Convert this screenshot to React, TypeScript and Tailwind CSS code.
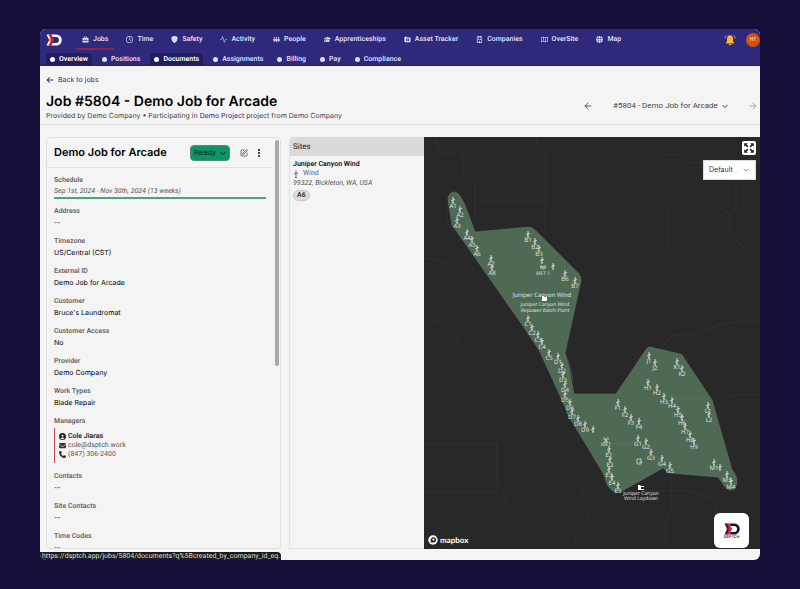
import type { ElementType, ReactNode } from "react";
import clsx from "clsx";
import {
  FaArrowLeft,
  FaChevronDown,
  FaCircle,
  FaCircleUser,
  FaEnvelope,
  FaGlobe,
  FaGraduationCap,
  FaPeopleGroup,
  FaPhone,
  FaRegBuilding,
  FaRegClock,
  FaRegMap,
} from "react-icons/fa6";
import { BsFillShieldFill } from "react-icons/bs";
import { Activity, ArrowLeft, ArrowRight, ChevronDown, EllipsisVertical, SquarePen } from "lucide-react";

interface IconProps {
  className?: string;
}

function ToolboxIcon({ className }: IconProps) {
  return (
    <svg viewBox="0 0 16 16" className={className} fill="currentColor" aria-hidden="true">
      <path d="M5 4V2.5A1.5 1.5 0 0 1 6.500 1h3A1.500 1.500 0 0 1 11 2.500V4h2.500A1.500 1.500 0 0 1 15 5.500V9h-4V8H9.500v1h-3V8H5v1H1V5.500A1.500 1.500 0 0 1 2.500 4zm1.500 0h3V2.500h-3zM1 10.300h4v1h1.500v-1h3v1H11v-1h4v3.200a1.500 1.500 0 0 1-1.500 1.500h-11A1.500 1.500 0 0 1 1 13.500z" />
    </svg>
  );
}

function AssetIcon({ className }: IconProps) {
  return (
    <svg viewBox="0 0 16 16" className={className} fill="currentColor" aria-hidden="true">
      <path
        fillRule="evenodd"
        d="M1 3a1.500 1.500 0 0 1 1.500-1.500H6L8 3.500h5.500A1.500 1.500 0 0 1 15 5v8a1.500 1.500 0 0 1-1.500 1.500h-11A1.500 1.500 0 0 1 1 13zm4 3.500v5h6.500v-5H9.700L9 5.500H7.500l-.7 1zM8.200 7.500a1.500 1.500 0 1 1 0 3 1.500 1.500 0 0 1 0-3z"
      />
    </svg>
  );
}

function BellIcon({ className }: IconProps) {
  return (
    <svg viewBox="0 0 24 24" className={className} aria-hidden="true">
      <g fill="#fdb33c">
        <path d="M12 2.500c-3.800 0-6 2.800-6 6.500v5.500L4 18v1h16v-1l-2-3.500V9c0-3.700-2.200-6.500-6-6.500z" />
        <path d="M9.500 20h5a2.500 2.500 0 0 1-5 0z" />
      </g>
      <path d="M5 2.500C3 4 2 6 1.800 9M19 2.500c2 1.500 3 3.500 3.200 6.500" fill="none" stroke="#f0a050" strokeWidth="1.800" />
    </svg>
  );
}

function Logo({ className, dark }: IconProps & { dark?: boolean }) {
  return (
    <svg viewBox="0 0 32 24" className={className} fill="none" aria-hidden="true">
      <path
        d="M10 1h11a10.500 11 0 0 1 0 22H10l3.500-5H20a6 6 0 0 0 0-12h-6.500z"
        fill={dark ? "#14173d" : "#fff"}
      />
      <path d="M1 1h6.500L12 12 7.500 23H1l5.500-11z" fill={dark ? "#14173d" : "#fff"} />
      <path d="M5 1h5l6 11-6 11H5l5-11z" fill="#d3202e" />
      <path d="M4 12h9" stroke="#d3202e" strokeWidth="2" />
    </svg>
  );
}

function TurbineIcon({ className }: IconProps) {
  return (
    <svg viewBox="0 0 12 16" className={className} stroke="currentColor" strokeWidth="1.600" fill="none" aria-hidden="true">
      <path d="M6 6V1M6 6l-4 2M6 6l4 1M6 7v8M4 15h4" />
    </svg>
  );
}

interface NavItem {
  label: string;
  icon: ElementType;
}

const NAV: NavItem[] = [
  { label: "Jobs", icon: ToolboxIcon },
  { label: "Time", icon: FaRegClock },
  { label: "Safety", icon: BsFillShieldFill },
  { label: "Activity", icon: Activity },
  { label: "People", icon: FaPeopleGroup },
  { label: "Apprenticeships", icon: FaGraduationCap },
  { label: "Asset Tracker", icon: AssetIcon },
  { label: "Companies", icon: FaRegBuilding },
  { label: "OverSite", icon: FaRegMap },
  { label: "Map", icon: FaGlobe },
];

const TABS = ["Overview", "Positions", "Documents", "Assignments", "Billing", "Pay", "Compliance"];
const HIGHLIGHTED = ["Overview", "Documents"];

function TopNav() {
  return (
    <header className="shrink-0 border-b border-[#211a80] bg-[#2e297b] text-[7px] font-semibold text-[#dedcf2]">
      <div className="flex h-[21px] items-center pl-1.5">
        <a href="#home" aria-label="Home" className="mr-3.5">
          <Logo className="h-3 w-4" />
        </a>
        <nav aria-label="Main" className="flex h-full items-center gap-1.5">
          {NAV.map(({ label, icon: Icon }, i) => (
            <a
              key={label}
              href={`#${label}`}
              className={clsx(
                "flex h-full items-center gap-1 border-y-2 border-transparent px-1.5 whitespace-nowrap",
                i === 0 && "border-b-[#8f2050]"
              )}
            >
              <Icon className="size-[7px] shrink-0" />
              {label}
            </a>
          ))}
        </nav>
        <button type="button" aria-label="Notifications" className="ml-auto">
          <BellIcon className="size-3" />
        </button>
        <button
          type="button"
          className="ml-2.5 size-3.5 shrink-0 rounded-full bg-[#d4500f] text-[5px] font-semibold text-[#ffd9a8]"
        >
          HT
        </button>
      </div>
      <nav aria-label="Job sections" className="flex h-[15px] items-end gap-1.5 px-1.5">
        {TABS.map((tab) => (
          <a
            key={tab}
            href={`#${tab}`}
            className={clsx(
              "flex h-3 items-center gap-1 rounded-t-sm px-1",
              HIGHLIGHTED.includes(tab) && "bg-[#211d5e] text-white"
            )}
          >
            <FaCircle className="size-[5px] shrink-0" />
            {tab}
          </a>
        ))}
      </nav>
    </header>
  );
}

function JobHeader() {
  return (
    <div className="flex shrink-0 items-end border-b border-[#dedede] px-1.5 pt-2">
      <div className="pb-0.5 font-[Inter,sans-serif]">
        <a href="#jobs" className="flex h-3 items-center gap-1 text-[7px] text-[#2f2b78]">
          <FaArrowLeft className="size-2" />
          Back to jobs
        </a>
        <h1 className="mt-2 text-[14px] leading-4 font-semibold text-black">Job #5804 - Demo Job for Arcade</h1>
        <p className="text-[7px] leading-3 text-[#444]">
          Provided by Demo Company • Participating in{" "}
          <a href="#project" className="text-[#2f2b78]">
            Demo Project
          </a>{" "}
          project from Demo Company
        </p>
      </div>
      <div className="-mr-1 ml-auto flex items-center pb-3 text-[8px] text-[#444]">
        <button type="button" aria-label="Previous job">
          <ArrowLeft className="size-2.5" />
        </button>
        <div className="mx-5 flex items-center gap-1">
          <select aria-label="Job" className="appearance-none bg-transparent">
            <option>#5804 - Demo Job for Arcade</option>
          </select>
          <FaChevronDown className="size-1.5" />
        </div>
        <button type="button" aria-label="Next job" className="text-[#999]">
          <ArrowRight className="size-2.5" />
        </button>
      </div>
    </div>
  );
}

function Field({ label, children }: { label: string; children: ReactNode }) {
  return (
    <div className="mb-2">
      <dt className="text-[7px] leading-2.5 font-semibold text-[#666]">{label}</dt>
      <dd className="mt-0.5 font-[Inter,sans-serif] text-[7px] leading-2.5 text-black">{children}</dd>
    </div>
  );
}

function JobCard() {
  return (
    <section className="relative flex w-[235px] shrink-0 flex-col overflow-hidden rounded-sm border border-[#e0e0e0]">
      <div className="mr-2 flex h-[30px] shrink-0 items-center border-b border-[#e2e2e2] pr-2 pl-[7px]">
        <h2 className="font-[Inter,sans-serif] text-[11px] font-semibold text-black">Demo Job for Arcade</h2>
        <button
          type="button"
          className="ml-auto flex h-4 w-10 items-center justify-center gap-1 rounded-sm border border-[#4c8f75] bg-[#0d9467] text-[8px] text-[#06291d]"
        >
          Ready
          <FaChevronDown className="size-1.5" />
        </button>
        <button type="button" aria-label="Edit" className="ml-2.5 text-[#333]">
          <SquarePen className="size-2" />
        </button>
        <button type="button" aria-label="More" className="ml-1.5 text-[#111]">
          <EllipsisVertical className="size-2.5" strokeWidth={3} />
        </button>
      </div>
      <dl className="pt-[7px] pr-3.5 pl-[7px]">
        <div className="mb-[7px] border-b-2 border-[#4aa37e]">
          <dt className="text-[7px] leading-2.5 font-semibold text-[#666]">Schedule</dt>
          <dd className="text-[7px] leading-3 text-[#555] italic">Sep 1st, 2024 - Nov 30th, 2024 (13 weeks)</dd>
        </div>
        <Field label="Address">--</Field>
        <Field label="Timezone">US/Central (CST)</Field>
        <Field label="External ID">Demo Job for Arcade</Field>
        <Field label="Customer">Bruce's Laundromat</Field>
        <Field label="Customer Access">No</Field>
        <Field label="Provider">Demo Company</Field>
        <Field label="Work Types">Blade Repair</Field>
        <Field label="Managers">
          <div className="border-l border-[#c8454f] py-1 pl-1 font-[Roboto,sans-serif] leading-[9px] text-[#555]">
            <div className="flex items-center gap-0.5 font-semibold text-[#222]">
              <FaCircleUser className="size-[7px]" />
              Cole Jiaras
            </div>
            <div className="flex items-center gap-0.5">
              <FaEnvelope className="size-[7px] text-[#333]" />
              cole@dsptch.work
            </div>
            <div className="flex items-center gap-0.5">
              <FaPhone className="size-[7px] text-[#333]" />
              (847) 306-2400
            </div>
          </div>
        </Field>
        <Field label="Contacts">--</Field>
        <Field label="Site Contacts">--</Field>
        <Field label="Time Codes">--</Field>
      </dl>
      <div className="absolute top-0.5 right-px h-[55%] w-1 rounded-full bg-[#a8a8a8]" />
    </section>
  );
}

function SitesPanel() {
  return (
    <section className="w-[135px] shrink-0 overflow-hidden rounded-tl-sm border-b border-l border-[#e2e2e2]">
      <h2 className="flex h-[19px] items-center bg-[#dadada] pl-[3px] text-[8px] text-[#222]">Sites</h2>
      <div className="px-[3px] pt-1 text-[7px] leading-[9px] text-[#555]">
        <h3 className="font-semibold text-[#111]">Juniper Canyon Wind</h3>
        <p className="flex items-center gap-1 text-[#666]">
          <TurbineIcon className="h-2 w-1.5 text-[#4a4a8a]" />
          Wind
        </p>
        <p className="mt-px italic">99322, Bickleton, WA, USA</p>
        <span className="mt-0.5 inline-block rounded-full border border-[#c8c8c8] bg-[#dcdcdc] px-[3px] font-medium text-[#222]">
          A6
        </span>
      </div>
    </section>
  );
}

// [label, x, y] of each turbine, in map units
const TURBINES: [string, number, number][] = [
  ["A1", 29, 64], ["A2", 36, 73], ["A3", 33, 84], ["A4", 43, 96], ["A5", 48, 103], ["A6", 53, 112],
  ["A7", 67, 122], ["A8", 68, 131],
  ["B1", 104, 98], ["B2", 111, 105], ["B3", 115, 112], ["", 118, 124], ["", 129, 130], ["B6", 141, 137],
  ["B7", 151, 144],
  ["C1", 104, 182], ["C2", 108, 191], ["C3", 114, 198], ["C4", 118, 205], ["C5", 125, 216],
  ["D1", 134, 220], ["D2", 138, 229], ["D3", 139, 238], ["D4", 141, 248], ["D5", 141, 258],
  ["D6", 146, 266], ["D7", 148, 275], ["D8", 154, 282], ["D9", 161, 288], ["", 169, 293],
  ["E1", 185, 313], ["E2", 186, 323], ["E3", 185, 333], ["E4", 188, 341], ["E5", 194, 349],
  ["F1", 194, 266], ["F2", 201, 273], ["F3", 207, 281], ["F4", 215, 285],
  ["G1", 214, 302], ["G2", 222, 305], ["G3", 227, 316], ["G4", 238, 322], ["G5", 246, 329],
  ["H1", 224, 246], ["H2", 233, 251], ["H3", 240, 260], ["H4", 248, 264], ["H5", 254, 273],
  ["H6", 258, 281], ["H7", 261, 290], ["H8", 266, 298], ["H9", 270, 305],
  ["J1", 225, 219], ["J2", 231, 226], ["K1", 253, 225], ["K2", 258, 232],
  ["L1", 284, 269], ["L2", 285, 278],
  ["M1", 290, 326], ["", 296, 331], ["M3", 303, 338], ["M4", 307, 345],
];

function SiteMap() {
  return (
    <div className="relative min-w-0 flex-1 overflow-hidden bg-[#282828]">
      <svg
        viewBox="0 0 336 412"
        preserveAspectRatio="xMinYMin slice"
        className="block size-full font-['Open_Sans','Noto_Sans',sans-serif]"
        role="img"
        aria-label="Site map"
      >
        <g fill="none" stroke="#343434" strokeWidth="0.7">
          <path d="M10 0l7 17h22v21l12 10v31l20 13M51 65h70v40M112 0l3 10 7 8v47" />
          <path d="M156 181l62 43M0 122h12l20 10 15 10M6 183l16 3 12 13v14M42 96l-18-8-2-35" />
          <path d="M294 262l17-4h25M0 307h73v33l10 26 14 22 10 14M0 355h73v-48M247 317v55l-5 9v31" />
          <path d="M240 18h18l4 8h50M236 75h8v38M312 45v26l-8 12 6 18 10 10M265 71h34l10 10-8 20-14 12" />
          <path d="M202 317h45M218 354h48l24 8 8 24M236 211l12-12 26-2 22-10 40-4M150 412l2-14 12-20-8-32" />
        </g>
        <path
          d="M24 63C24 57 28 55 30 55C34 55 36 58 41 68L51 95L105 90Q108 90 111 93L155 137Q157 139 157 144L141 216L144 226L150 257H192L221 214Q223 210 226 210L256 217Q258 217 260 221L288 263L308 333Q313 338 313 345C312 353 307 355 302 351L294 340L246 336Q243 335 239 331L198 354Q193 357 189 354Q183 350 182 344L179 336L144 278L138 263L115 213L101 192L38 102L28 88Z"
          fill="#4f6a54"
          stroke="#6b7a6d"
          strokeWidth="0.5"
        />
        <path d="M140 216l5 10 4 18M184 307l34-1M226 251l30 12 28-2" fill="none" stroke="#5f7663" strokeWidth="0.5" />
        <g fill="#e6e9e6" stroke="none" fontSize="5" textAnchor="middle">
          {TURBINES.map(([label, x, y]) => (
            <g key={`${x}-${y}`}>
              <path
                d={`M${x} ${y - 4}v6M${x} ${y - 1}l-1.800 1M${x} ${y - 1}l1.800-.5M${x - 1} ${y + 2}h2`}
                stroke="#e6e9e6"
                strokeWidth="0.9"
              />
              <text x={x} y={y + 7} fontSize="6">
                {label}
              </text>
            </g>
          ))}
          <g stroke="#e6e9e6" strokeWidth="0.7" fill="none">
            <path d="M117 128v4M119 129v4M121 128v4M116 130h6M180 300v3M184 300v3M182 301v5M180 306l2-4 2 4" />
            <path d="M213 322h4v5h-4zM215 325h3" />
          </g>
          <path d="M118 159h2v1h3v4h-5zM214 348h2l1 1h3v1h-3v2h3v1h-6z" fill="#fff" />
          <text x="119" y="138">MET 1</text>
          <text x="182" y="309">MET</text>
          <text x="118" y="160" fontSize="6">Juniper Canyon Wind</text>
          <text x="121" y="169">Juniper Canyon Wind</text>
          <text x="121" y="175">Repower Batch Plant</text>
          <text x="217" y="358">Juniper Canyon</text>
          <text x="217" y="363">Wind Laydown</text>
        </g>
      </svg>
      <button
        type="button"
        aria-label="Full screen"
        className="absolute top-1 right-1 flex size-3.5 items-center justify-center rounded-xs bg-white text-[#222]"
      >
        <svg viewBox="0 0 20 20" className="size-3" fill="currentColor" aria-hidden="true">
          <path d="M2 2h6L6 4l3 3-2 2-3-3-2 2zM18 2h-6l2 2-3 3 2 2 3-3 2 2zM2 18h6l-2-2 3-3-2-2-3 3-2-2zM18 18h-6l2-2-3-3 2-2 3 3 2-2z" />
        </svg>
      </button>
      <div className="absolute top-[23px] right-1 w-[53px]">
        <select
          aria-label="Map style"
          className="block h-5 w-full appearance-none border border-[#ddd] bg-white pl-[5px] font-[Inter,sans-serif] text-[7px] text-[#333]"
        >
          <option>Default</option>
        </select>
        <ChevronDown className="pointer-events-none absolute top-1.5 right-1.5 size-2 text-[#555]" />
      </div>
      <a href="#mapbox" className="absolute bottom-1 left-1 flex items-center gap-0.5 font-[Lato,sans-serif] text-[8px] leading-2.5 font-bold text-white">
        <svg viewBox="0 0 18 18" className="size-2.5" aria-hidden="true">
          <circle cx="9" cy="9" r="8.500" fill="#fff" />
          <path d="M5 13.500c-1-5 .5-9.500 5-9.500a4.500 4.500 0 0 1 3.500 7.500C11.500 13.800 8 14 5 13.500z" fill="#282828" />
          <path d="M9.800 5.500l.9 1.900 1.900.9-1.900.9-.9 1.900-.9-1.900L7 8.300l1.900-.9z" fill="#fff" />
        </svg>
        mapbox
      </a>
      <div className="absolute right-[11px] bottom-px flex size-[35px] flex-col items-center justify-center rounded-md bg-white">
        <Logo dark className="h-3 w-4" />
        <span className="text-[4px] leading-1 font-bold text-[#8f2335]">DSPTCH</span>
      </div>
    </div>
  );
}

export default function App() {
  return (
    <div className="h-screen bg-[#150f39] px-10 py-[29px] font-[Roboto,'Liberation_Sans',sans-serif] [text-rendering:geometricPrecision]">
      <div className="relative flex h-full flex-col overflow-hidden rounded-md bg-[#f4f4f4]">
        <TopNav />
        <JobHeader />
        <main className="flex min-h-0 flex-1 pt-3 pb-[11px] pl-1.5">
          <JobCard />
          <div className="ml-2 flex min-w-0 flex-1">
            <SitesPanel />
            <SiteMap />
          </div>
        </main>
        <div className="absolute bottom-0 left-0 h-2 w-[241px] overflow-hidden rounded-tr-sm bg-[#1b1b1b] pl-0.5 text-[7px] leading-2 whitespace-nowrap text-[#ddd]">
          https://dsptch.app/jobs/5804/documents?q%5Bcreated_by_company_id_eq...
        </div>
      </div>
    </div>
  );
}
